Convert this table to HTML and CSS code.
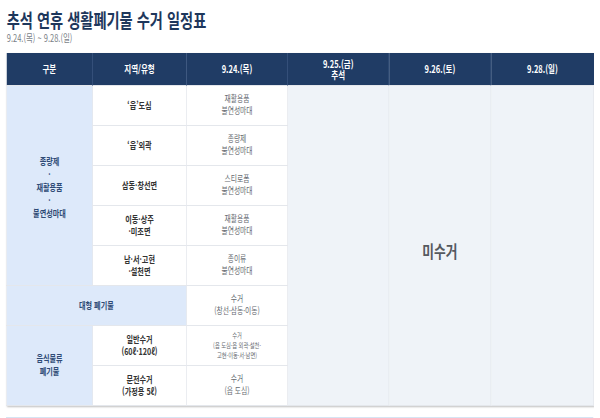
FILE: index.html
```html
<!DOCTYPE html>
<html lang="ko">
<head>
<meta charset="utf-8">
<link rel="stylesheet" href="styles.css">
</head>
<body>
<div class="page">
  <h1 class="title">추석 연휴 생활폐기물 수거 일정표</h1>
  <p class="period">9.24.(목) ~ 9.28.(일)</p>
  <table class="sched">
    <colgroup>
      <col class="c1"><col class="c2"><col class="c3"><col class="c4"><col class="c5"><col class="c6">
    </colgroup>
    <thead>
      <tr>
        <th>구분</th>
        <th>지역/유형</th>
        <th>9.24.(목)</th>
        <th><span class="hl">9.25.(금)</span><span class="hl">추석</span></th>
        <th>9.26.(토)</th>
        <th>9.28.(일)</th>
      </tr>
    </thead>
    <tbody>
      <tr>
        <td class="cat tall" rowspan="5">종량제<br>·<br>재활용품<br>·<br>불연성마대</td>
        <td class="area">‘읍’도심</td>
        <td class="day">재활용품<br>불연성마대</td>
        <td class="off" rowspan="8"></td>
        <td class="off" rowspan="8"><span class="none">미수거</span></td>
        <td class="off" rowspan="8"></td>
      </tr>
      <tr>
        <td class="area">‘읍’외곽</td>
        <td class="day">종량제<br>불연성마대</td>
      </tr>
      <tr>
        <td class="area">삼동·창선면</td>
        <td class="day">스티로폼<br>불연성마대</td>
      </tr>
      <tr>
        <td class="area">이동·상주<br>·미조면</td>
        <td class="day">재활용품<br>불연성마대</td>
      </tr>
      <tr>
        <td class="area">남·서·고현<br>·설천면</td>
        <td class="day">종이류<br>불연성마대</td>
      </tr>
      <tr>
        <td class="cat" colspan="2">대형 폐기물</td>
        <td class="day">수거<br>(창선·삼동·이동)</td>
      </tr>
      <tr>
        <td class="cat" rowspan="2">음식물류<br>폐기물</td>
        <td class="area">일반수거<br>(60ℓ·120ℓ)</td>
        <td class="day small">수거<br>(읍 도심·읍 외곽·설천·<br>고현·이동·서·남면)</td>
      </tr>
      <tr>
        <td class="area">문전수거<br>(가정용 5ℓ)</td>
        <td class="day">수거<br>(읍 도심)</td>
      </tr>
    </tbody>
  </table>
  <div class="note"></div>
</div>
</body>
</html>
```

FILE: styles.css
```css
html, body {
  margin: 0;
  padding: 0;
  background: #ffffff;
  overflow: hidden;
  width: 600px;
  height: 418px;
}

.page {
  box-sizing: border-box;
  width: 792px;
  height: 418px;
  overflow: hidden;
  padding: 8px 0 0 8px;
  transform: scaleX(0.75);
  transform-origin: 0 0;
  font-family: "Noto Sans CJK KR", "Noto Sans", sans-serif;
}

.title {
  margin: 0;
  font-size: 19px;
  line-height: 23px;
  font-weight: 700;
  color: #1e375c;
  padding-left: 1px;
}

.period {
  margin: 0;
  font-size: 10px;
  line-height: 13px;
  color: #7a7f87;
  padding-left: 1px;
}

.sched {
  margin-top: 9px;
  width: 783px;
  table-layout: fixed;
  border-collapse: collapse;
  box-shadow: 1px 1px 2px rgba(0, 0, 0, 0.25);
}

.c1 { width: 115px; }
.c2 { width: 125px; }
.c3 { width: 135px; }
.c4 { width: 135px; }
.c5 { width: 136px; }
.c6 { width: 137px; }

.sched thead tr {
  height: 32px;
}

.sched th {
  background: #203c65;
  color: #ffffff;
  font-size: 10px;
  line-height: 12px;
  font-weight: 700;
  border-left: 1px solid #3b5680;
  padding: 0;
}

.sched th:first-child {
  border-left: none;
}

.hl {
  display: block;
  line-height: 11px;
}

.sched tbody tr {
  height: 40px;
}

.sched td {
  border: 1px solid #e4e7ec;
  text-align: center;
  vertical-align: middle;
  padding: 0;
  font-size: 9px;
  line-height: 12px;
}

.cat {
  background: #dde9fa;
  color: #2f4b76;
  font-weight: 700;
}

.sched td.cat {
  font-size: 9.5px;
  line-height: 13px;
}

.sched td.cat.tall {
  padding-top: 4px;
}

.area {
  background: #ffffff;
  color: #333333;
  font-weight: 700;
}

.sched td.area {
  font-size: 9.5px;
  line-height: 12.5px;
}

.day {
  background: #ffffff;
  color: #666a70;
}

.sched td.day.small {
  font-size: 7px;
  line-height: 10px;
}

.off {
  background: #eff3f8;
}

.none {
  display: block;
  font-size: 17px;
  line-height: 20px;
  font-weight: 700;
  color: #55595f;
  padding-top: 12px;
}

.note {
  margin-top: 11px;
  width: 781px;
  height: 20px;
  background: #f3f8fd;
  border: 1px solid #d5e4f3;
}
```
